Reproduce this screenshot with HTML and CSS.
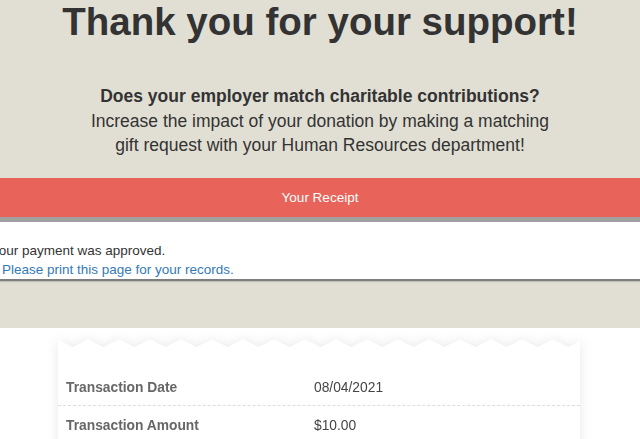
FILE: index.html
```html
<!DOCTYPE html>
<html lang="en">
<head>
<meta charset="utf-8">
<title>Thank you for your support!</title>
<link rel="stylesheet" href="styles.css">
</head>
<body>
<div class="hero">
  <h1 class="title">Thank you for your support!</h1>
  <div class="sub">
    <div class="sub-q">Does your employer match charitable contributions?</div>
    <div>Increase the impact of your donation by making a matching</div>
    <div>gift request with your Human Resources department!</div>
  </div>
  <div class="receipt-bar">Your Receipt</div>
  <div class="msg-box">
    <div class="msg">
      <div class="msg-ok">Your payment was approved.</div>
      <div class="msg-link"><a href="#">Please print this page for your records.</a></div>
    </div>
  </div>
</div>
<div class="card-wrap">
  <div class="card">
    <div class="zigzag"></div>
    <div class="card-body">
      <div class="row">
        <div class="cell label">Transaction Date</div>
        <div class="cell value">08/04/2021</div>
      </div>
      <div class="row">
        <div class="cell label">Transaction Amount</div>
        <div class="cell value">$10.00</div>
      </div>
    </div>
  </div>
</div>
</body>
</html>
```
FILE: styles.css
```css
html, body {
  margin: 0;
  padding: 0;
  background: #ffffff;
  font-family: "Liberation Sans", Arial, sans-serif;
  overflow: hidden;
}

.hero {
  background: #e1dfd3;
  padding-bottom: 47px;
}

.title {
  margin: 0;
  font-size: 38.5px;
  line-height: 44px;
  font-weight: bold;
  color: #333333;
  text-align: center;
}

.sub {
  margin-top: 40px;
  font-size: 17.5px;
  line-height: 24.5px;
  color: #333333;
  text-align: center;
}

.sub-q {
  font-weight: bold;
}

.receipt-bar {
  margin-top: 20px;
  height: 39px;
  line-height: 39px;
  background: #e8645a;
  color: #ffffff;
  font-size: 13.5px;
  text-align: center;
  border-bottom: 5px solid #a0a0a0;
}

.msg-box {
  background: #ffffff;
  padding-top: 19px;
  border-bottom: 2px solid #7d7d7d;
  box-shadow: 0 1px 1px #c4c2b8;
  height: 38px;
}

.msg {
  margin-left: -9px;
  font-size: 13.5px;
  line-height: 19px;
  color: #333333;
}

.msg-link {
  padding-left: 11px;
}

.msg-link a {
  color: #337ab7;
  text-decoration: none;
}

.card-wrap {
  display: flex;
  justify-content: center;
  padding-top: 11px;
}

.card {
  width: 522px;
  margin-left: -2px;
  filter: drop-shadow(0 0 6px rgba(0, 0, 0, 0.09));
}

.zigzag {
  height: 8px;
  background: conic-gradient(from 117.3deg at 50% 0, #ffffff 125.4deg, transparent 0);
  background-size: 31px 8px;
  background-position: 14.5px 0;
  background-repeat: repeat-x;
}

.card-body {
  background: #ffffff;
  padding-top: 21px;
  padding-bottom: 20px;
}

.row {
  display: grid;
  grid-template-columns: 248px 1fr;
  height: 38px;
  box-sizing: border-box;
  align-items: start;
  border-bottom: 1px dashed #dddddd;
  font-size: 13.8px;
}

.row:last-child {
  border-bottom: none;
}

.cell {
  padding-left: 8px;
  padding-top: 12px;
}

.label {
  font-weight: bold;
  color: #676767;
}

.value {
  color: #444444;
}
```
